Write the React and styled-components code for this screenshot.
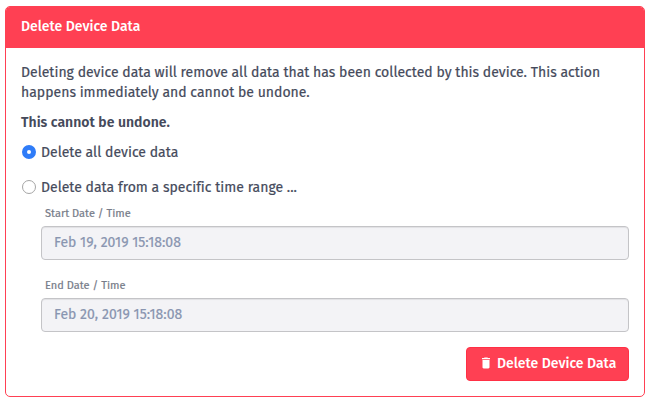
import React from "react";
import styled, { createGlobalStyle } from "styled-components";

const Global = createGlobalStyle`
  * { box-sizing: border-box; }
  body { margin: 0; background: #fff; }
`;

const Card = styled.section`
  width: 640px;
  height: 391px;
  margin: 6px 0 0 5px;
  border: 1px solid #ff4053;
  border-radius: 5px;
  overflow: hidden;
  color: #454a5b;
  font: 400 14px/20px "Fira Sans", "Noto Sans", sans-serif;
  white-space: nowrap;
`;

const Header = styled.header`
  height: 41px;
  padding: 10px 15px;
  background: #ff4053;
  color: #fff;
  font-weight: 500;
`;

const Body = styled.div`
  padding: 15px;
`;

const Paragraph = styled.p`
  margin: 0 0 10px;
`;

const Text = styled.span`
  letter-spacing: 0.015px;
  -webkit-text-stroke: 0.2px currentColor;
`;

const Title = styled.span`
  font-weight: 500;
`;

const Strong = styled.strong`
  font-weight: 600;
  letter-spacing: 0.03px;
`;

const Option = styled.label`
  display: flex;
  align-items: center;
  height: 20px;
  margin-bottom: ${(p) => p.$gap || 0}px;
`;

const Radio = styled.input.attrs({ type: "radio" })`
  appearance: none;
  width: 14px;
  height: 14px;
  margin: 0 5px 2px 1px;
  border-radius: 50%;
  border: 1px solid #a5a5a5;
  background: #fff;
  &:checked {
    border: 5px solid #2f7cf8;
  }
`;

const Fields = styled.div`
  padding-left: 20px;
`;

const Field = styled.div`
  margin-bottom: ${(p) => p.$gap}px;
`;

const FieldLabel = styled.div`
  height: 20px;
  padding-left: 4px;
  margin-bottom: 8px;
  color: #777c89;
  font-size: 11px;
  line-height: 32px;
`;

const DateBox = styled.div`
  height: 34px;
  padding: 6px 12px;
  border: 1px solid #c4c4c7;
  border-radius: 4px;
  background: #f3f3f6;
  box-shadow: inset 0 1px 1px rgba(0, 0, 0, 0.075);
  color: #8995b0;
`;

const Actions = styled.div`
  display: flex;
  justify-content: flex-end;
`;

const DeleteButton = styled.button`
  display: flex;
  align-items: center;
  width: 163px;
  height: 34px;
  padding: 0 0 0 15px;
  border: 1px solid #ff3045;
  border-radius: 4px;
  background: #ff4053;
  color: #fff;
  font: inherit;
  white-space: nowrap;
  svg {
    flex: none;
    margin: 0 7px 2px 0;
  }
`;

const TrashIcon = () => (
  <svg width="8" height="12" viewBox="0 0 8 12" fill="currentColor">
    <path d="M0 1h2l.6-.6h2.8L6 1h2v1.3H0zM.5 3h7v7.2c0 .7-.5 1.2-1.2 1.2H1.7C1 11.4.5 10.9.5 10.2z" />
  </svg>
);

export default function App() {
  return (
    <>
      <Global />
      <Card>
        <Header><Title>Delete Device Data</Title></Header>
        <Body>
          <Paragraph>
            <Text>Deleting device data will remove all data that has been collected by this device. This action</Text>
            <br />
            <Text>happens immediately and cannot be undone.</Text>
          </Paragraph>
          <Paragraph><Strong>This cannot be undone.</Strong></Paragraph>
          <Option $gap={15}>
            <Radio name="scope" defaultChecked />
            <Text>Delete all device data</Text>
          </Option>
          <Option>
            <Radio name="scope" />
            <Text>Delete data from a specific time range ...</Text>
          </Option>
          <Fields>
            <Field $gap={10}>
              <FieldLabel><Text>Start Date / Time</Text></FieldLabel>
              <DateBox><Text>Feb 19, 2019 15:18:08</Text></DateBox>
            </Field>
            <Field $gap={15}>
              <FieldLabel><Text>End Date / Time</Text></FieldLabel>
              <DateBox><Text>Feb 20, 2019 15:18:08</Text></DateBox>
            </Field>
          </Fields>
          <Actions>
            <DeleteButton>
              <TrashIcon />
              <Title>Delete Device Data</Title>
            </DeleteButton>
          </Actions>
        </Body>
      </Card>
    </>
  );
}
